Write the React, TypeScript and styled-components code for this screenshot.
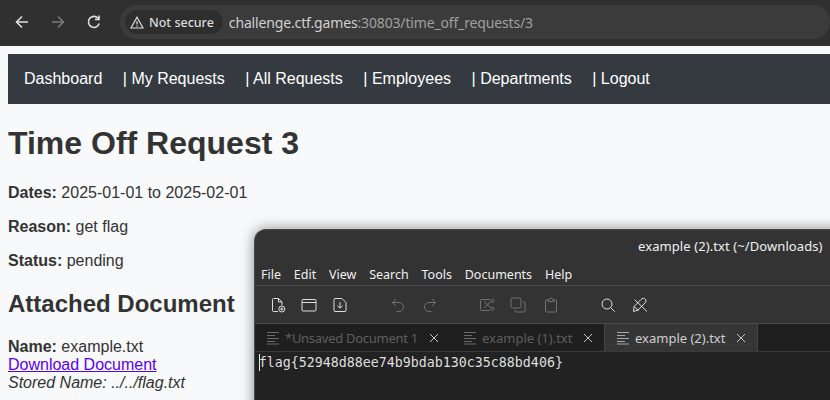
import React from 'react';
import styled, { createGlobalStyle } from 'styled-components';

const GlobalStyle = createGlobalStyle`
  html, body {
    margin: 0;
    padding: 0;
    background: #f8f9fa;
  }
`;

const Screen = styled.div`
  position: relative;
  width: 830px;
  height: 400px;
  overflow: hidden;
  background: #f8f9fa;
  color: #333;
  font-family: 'Liberation Sans', Arial, sans-serif;
  font-size: 16px;
`;

const BrowserBar = styled.div`
  display: flex;
  align-items: center;
  height: 46px;
  box-sizing: border-box;
  padding: 0 0 2px 14px;
  background: #303030;
`;

const NavIcon = styled.svg<{ $dim?: boolean }>`
  width: 16px;
  height: 16px;
  margin-right: 20px;
  fill: none;
  stroke: ${(p) => (p.$dim ? '#7b7b7b' : '#dedede')};
  stroke-width: 1.6;
  flex: none;
`;

const Omnibox = styled.div`
  display: flex;
  align-items: center;
  height: 34px;
  width: 720px;
  margin-left: -2px;
  padding-left: 5px;
  box-sizing: border-box;
  border-radius: 17px;
  background: #3b3b3b;
  font-family: 'Noto Sans', sans-serif;
  font-size: 14px;
`;

const SecurityChip = styled.div`
  display: flex;
  align-items: center;
  gap: 5px;
  height: 24px;
  padding: 0 9px 0 5px;
  border-radius: 12px;
  background: #2e2e2e;
  color: #dcdcdc;
  font-size: 12.5px;
  font-weight: 500;
`;

const Url = styled.div`
  margin-left: 6px;
  color: #a0a0a0;
  letter-spacing: -0.15px;
`;

const Host = styled.span`
  color: #d0d0d0;
`;

const Page = styled.main`
  padding: 8px;
`;

const Nav = styled.nav`
  display: flex;
  gap: 20.5px;
  width: 830px;
  height: 50px;
  box-sizing: border-box;
  padding: 16px;
  background: #343a40;
  line-height: 18px;
`;

const NavLink = styled.a`
  color: #fff;
  text-decoration: none;
`;

const Title = styled.h1`
  margin: 21px 0 22px;
  font-size: 32px;
  line-height: 37px;
`;

const Field = styled.p`
  margin: 16px 0;
  line-height: 18px;
`;

const SubTitle = styled.h2`
  margin: 20px 0 20px;
  font-size: 24px;
  line-height: 28px;
`;

const Attachment = styled.div`
  line-height: 18px;
`;

const Download = styled.a`
  color: #5a00ee;
`;

const EditorWindow = styled.section`
  position: absolute;
  left: 254px;
  top: 229px;
  width: 600px;
  height: 190px;
  border-radius: 12px 0 0 0;
  background: #333;
  color: #f0f0f0;
  box-shadow: 0 0 14px rgba(0, 0, 0, 0.45);
  border: 1px solid #4a4a4a;
  border-width: 1px 0 0 1px;
  box-sizing: border-box;
  font-family: 'Noto Sans', sans-serif;
  font-size: 13px;
  overflow: hidden;
`;

const TitleBar = styled.div`
  height: 32px;
  box-sizing: border-box;
  padding: 7px 0 0 383px;
  font-size: 13px;
  font-weight: 400;
  line-height: 18px;
  letter-spacing: 0.09px;
  white-space: nowrap;
`;

const MenuBar = styled.div`
  display: flex;
  gap: 12.8px;
  height: 24px;
  box-sizing: border-box;
  padding: 4px 0 0 6px;
  border-bottom: 1px solid #4a4a4a;
  font-size: 12.5px;
  line-height: 17px;
`;

const ToolBar = styled.div`
  display: flex;
  align-items: center;
  height: 38px;
  box-sizing: border-box;
  padding-left: 15px;
  border-bottom: 1px solid #4a4a4a;
`;

const ToolIcon = styled.svg<{ $dim?: boolean; $after?: number }>`
  width: 16px;
  height: 16px;
  margin-right: ${(p) => p.$after ?? 15}px;
  fill: none;
  stroke: ${(p) => (p.$dim ? '#727272' : '#dcdcdc')};
  stroke-width: 1;
  flex: none;
`;

const TabStrip = styled.div`
  display: flex;
  height: 28px;
  background: #1f1f1f;
  border-bottom: 1px solid #3a3a3a;
  box-sizing: border-box;
`;

const Tab = styled.div<{ $active?: boolean; $width: number }>`
  display: flex;
  align-items: center;
  width: ${(p) => p.$width}px;
  box-sizing: border-box;
  padding-left: 11px;
  background: ${(p) => (p.$active ? '#363636' : 'transparent')};
  border-left: ${(p) => (p.$active ? '1px solid #454545' : 'none')};
  border-right: ${(p) => (p.$active ? '1px solid #454545' : 'none')};
  color: ${(p) => (p.$active ? '#cfcfcf' : '#5e5e5e')};
  font-size: 13px;
  white-space: nowrap;
`;

const TabLabel = styled.span<{ $tight?: boolean }>`
  letter-spacing: ${(p) => (p.$tight ? '-0.28px' : '0')};
`;

const TabIcon = styled.svg<{ $active?: boolean }>`
  width: 14px;
  height: 14px;
  margin-right: 5px;
  fill: none;
  stroke: ${(p) => (p.$active ? '#a8a8a8' : '#6a6a6a')};
  stroke-width: 1;
  flex: none;
`;

const TabClose = styled.svg`
  width: 10px;
  height: 10px;
  margin-left: 11px;
  fill: none;
  stroke: #c4c4c4;
  stroke-width: 1;
  flex: none;
`;

const Editor = styled.div`
  height: 60px;
  padding: 2px 0 0 3.7px;
  background: #222;
  color: #dedede;
  font-family: 'DejaVu Sans Mono', monospace;
  font-size: 13.3px;
  line-height: 18px;
`;

const Caret = styled.span`
  display: inline-block;
  width: 1px;
  height: 17px;
  margin-right: -1px;
  vertical-align: -4px;
  background: #e8e8e8;
`;

const TabGlyph = ({ active }: { active?: boolean }) => (
  <TabIcon $active={active} viewBox="0 0 14 14">
    <path d="M1 1.500h12M1 4.500h8M1 7.500h12M1 10.500h8M1 13h12" />
  </TabIcon>
);

const CloseGlyph = () => (
  <TabClose viewBox="0 0 10 10">
    <path d="M1 1l8 8M9 1l-8 8" />
  </TabClose>
);

const tabs = [
  { label: '*Unsaved Document 1', width: 197, tight: true },
  { label: 'example (1).txt', width: 152 },
  { label: 'example (2).txt', width: 154, active: true },
];

const App = () => {
  return (
    <Screen>
      <GlobalStyle />
      <BrowserBar>
        <NavIcon viewBox="0 0 16 16">
          <path d="M14 8H2.500M8 2.500L2.500 8 8 13.500" />
        </NavIcon>
        <NavIcon $dim viewBox="0 0 16 16">
          <path d="M2 8h11.500M8 2.500L13.500 8 8 13.500" />
        </NavIcon>
        <NavIcon viewBox="0 0 16 16">
          <path d="M13.200 9.500A5.500 5.500 0 1 1 12 4.200M13 1.500v4H9" />
        </NavIcon>
        <Omnibox>
          <SecurityChip>
            <svg width="14" height="13" viewBox="0 0 14 13" fill="none" stroke="#dcdcdc" strokeWidth="1.2">
              <path d="M7 1.300L13 12H1zM7 5v3.600M7 9.600v1.100" />
            </svg>
            Not secure
          </SecurityChip>
          <Url>
            <Host>challenge.ctf.games</Host>:30803/time_off_requests/3
          </Url>
        </Omnibox>
      </BrowserBar>

      <Page>
        <Nav>
          <NavLink href="#">Dashboard</NavLink>
          <NavLink href="#">| My Requests</NavLink>
          <NavLink href="#">| All Requests</NavLink>
          <NavLink href="#">| Employees</NavLink>
          <NavLink href="#">| Departments</NavLink>
          <NavLink href="#">| Logout</NavLink>
        </Nav>
        <Title>Time Off Request 3</Title>
        <Field>
          <strong>Dates:</strong> 2025-01-01 to 2025-02-01
        </Field>
        <Field>
          <strong>Reason:</strong> get flag
        </Field>
        <Field>
          <strong>Status:</strong> pending
        </Field>
        <SubTitle>Attached Document</SubTitle>
        <Attachment>
          <strong>Name:</strong> example.txt
          <br />
          <Download href="#">Download Document</Download>
          <br />
          <em>Stored Name: ../../flag.txt</em>
        </Attachment>
      </Page>

      <EditorWindow>
        <TitleBar>example (2).txt (~/Downloads)</TitleBar>
        <MenuBar>
          <span>File</span>
          <span>Edit</span>
          <span>View</span>
          <span>Search</span>
          <span>Tools</span>
          <span>Documents</span>
          <span>Help</span>
        </MenuBar>
        <ToolBar>
          <ToolIcon viewBox="0 0 16 16">
            <path d="M8 14.500H3.500a1 1 0 0 1-1-1v-11a1 1 0 0 1 1-1h5l3.500 3.500v3M8.500 1.500v3.500H12" />
            <circle cx="11.800" cy="12" r="3" />
            <path d="M11.800 10.300v3.400M10.100 12h3.400" />
          </ToolIcon>
          <ToolIcon viewBox="0 0 16 16">
            <path d="M1 3.500a1 1 0 0 1 1-1h12a1 1 0 0 1 1 1V13a1 1 0 0 1-1 1H2a1 1 0 0 1-1-1zM1 5.500h14" />
          </ToolIcon>
          <ToolIcon $after={42} viewBox="0 0 16 16">
            <path d="M2 2.500a1 1 0 0 1 1-1h7l4 4v8a1 1 0 0 1-1 1H3a1 1 0 0 1-1-1zM8 5v6M5.500 8.800L8 11.200l2.500-2.400" />
          </ToolIcon>
          <ToolIcon $dim $after={16} viewBox="0 0 16 16">
            <path d="M6 2L2.500 5.500 6 9M3 5.500h6a4 4 0 0 1 0 9H6.500" />
          </ToolIcon>
          <ToolIcon $dim $after={41} viewBox="0 0 16 16">
            <path d="M10 2l3.500 3.500L10 9M13 5.500H7a4 4 0 0 0 0 9h2.500" />
          </ToolIcon>
          <ToolIcon $dim viewBox="0 0 16 16">
            <path d="M11 2.500H2.500a1 1 0 0 0-1 1v9a1 1 0 0 0 1 1H11M5 4.500l7 6.500M5 11l7-6.500" />
            <circle cx="13.500" cy="3.800" r="1.500" />
            <circle cx="13.500" cy="11.800" r="1.500" />
          </ToolIcon>
          <ToolIcon $dim $after={17} viewBox="0 0 16 16">
            <rect x="1" y="1" width="10" height="10" rx="1.500" />
            <path d="M13 5h1a1 1 0 0 1 1 1v8a1 1 0 0 1-1 1H6a1 1 0 0 1-1-1v-1" />
          </ToolIcon>
          <ToolIcon $dim $after={41} viewBox="0 0 16 16">
            <path d="M5 3H3.500a1 1 0 0 0-1 1v10a1 1 0 0 0 1 1h9a1 1 0 0 0 1-1V4a1 1 0 0 0-1-1H11M5 4.500V2.500h1.500a1.500 1.500 0 0 1 3 0H11v2z" />
          </ToolIcon>
          <ToolIcon $after={16} viewBox="0 0 16 16">
            <circle cx="7" cy="7" r="5" />
            <path d="M10.700 10.700l4 4" />
          </ToolIcon>
          <ToolIcon viewBox="0 0 16 16">
            <path d="M1.500 14.500l.5-5L9 2.500c1.500-1.500 3-1.500 4.200-.5s1 2.800-.2 4l-7 7zM2.500 2.500L15 14.500M2 9.500l4.500 4" />
          </ToolIcon>
        </ToolBar>
        <TabStrip>
          {tabs.map((tab) => (
            <Tab key={tab.label} $active={tab.active} $width={tab.width}>
              <TabGlyph active={tab.active} />
              <TabLabel $tight={tab.tight}>{tab.label}</TabLabel>
              <CloseGlyph />
            </Tab>
          ))}
        </TabStrip>
        <Editor>
          <Caret />
          {'flag{52948d88ee74b9bdab130c35c88bd406}'}
        </Editor>
      </EditorWindow>
    </Screen>
  );
};

export default App;
